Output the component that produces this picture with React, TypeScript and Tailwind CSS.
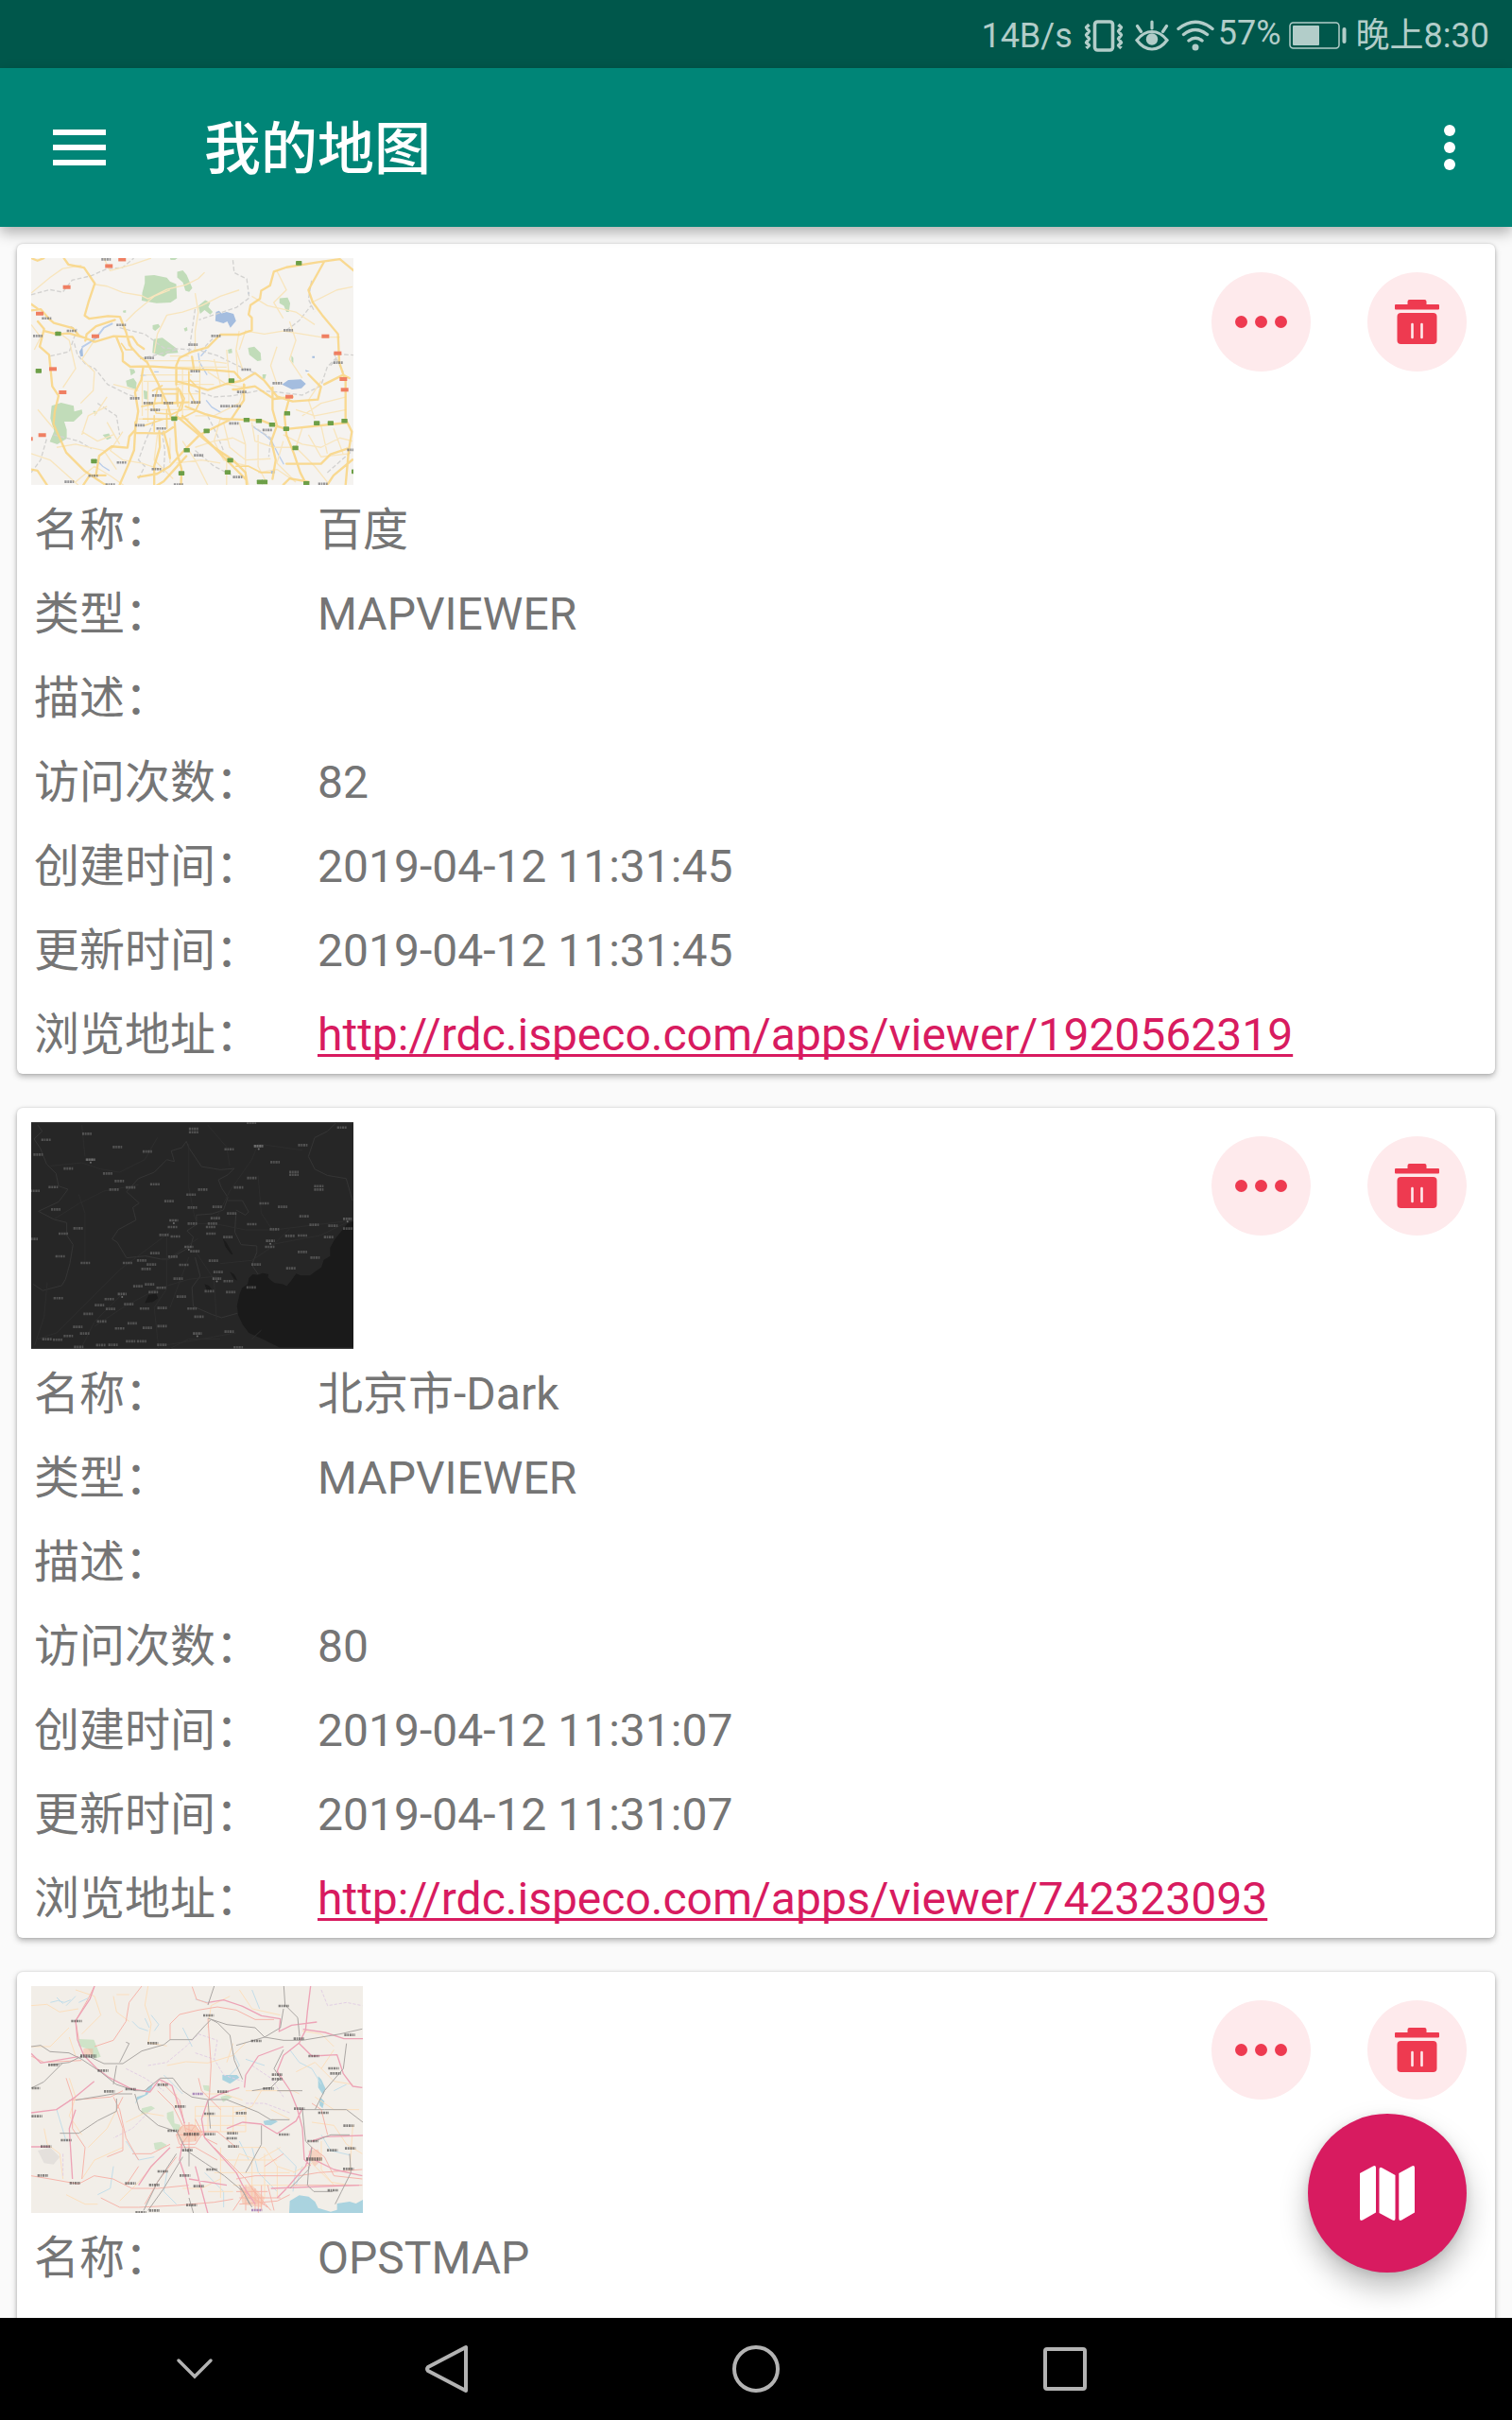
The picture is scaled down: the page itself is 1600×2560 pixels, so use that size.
import React from "react";

type MapKind = "light" | "dark" | "osm";

interface MapItem {
  name: string;
  type?: string;
  visits?: string;
  created?: string;
  updated?: string;
  url?: string;
  map: MapKind;
}

const ITEMS: MapItem[] = [
  {
    name: "百度",
    type: "MAPVIEWER",
    visits: "82",
    created: "2019-04-12 11:31:45",
    updated: "2019-04-12 11:31:45",
    url: "http://rdc.ispeco.com/apps/viewer/1920562319",
    map: "light",
  },
  {
    name: "北京市-Dark",
    type: "MAPVIEWER",
    visits: "80",
    created: "2019-04-12 11:31:07",
    updated: "2019-04-12 11:31:07",
    url: "http://rdc.ispeco.com/apps/viewer/742323093",
    map: "dark",
  },
  { name: "OPSTMAP", map: "osm" },
];

type Pt = [number, number];

/* Place-name marks, too small to read at thumbnail scale. */
function Marks({ pts, color, w = 32, h = 8, opacity = 1 }: { pts: Pt[]; color: string; w?: number; h?: number; opacity?: number }) {
  return (
    <g stroke={color} strokeWidth={h} strokeDasharray="7 2 5 2" opacity={opacity} fill="none">
      {pts.map(([x, y], i) => (
        <path key={i} d={`M${x - w / 2} ${y}h${w}`} />
      ))}
    </g>
  );
}

const L_GREEN: Pt[] = [[889, 55], [124, 279], [62, 397], [675, 428], [493, 549], [596, 588], [723, 553], [762, 556], [804, 568], [849, 581], [852, 532], [946, 563], [990, 563], [1034, 556], [878, 642], [533, 649], [671, 681], [663, 719], [516, 722], [238, 684], [765, 750], [780, 750], [913, 754], [1066, 717]];
const L_RED: Pt[] = [[328, 43], [286, 64], [152, 131], [66, 215], [243, 287], [108, 391], [139, 465], [74, 601], [974, 287], [1013, 341], [1031, 423], [1035, 457], [859, 479], [32, 613]];
const L_LABELS: Pt[] = [[277, 43], [88, 230], [167, 270], [60, 286], [325, 251], [414, 356], [553, 314], [626, 286], [856, 268], [1014, 371], [722, 393], [560, 398], [821, 436], [708, 464], [368, 484], [438, 475], [411, 499], [475, 499], [562, 497], [433, 521], [655, 509], [690, 509], [384, 570], [452, 580], [683, 564], [789, 585], [571, 665], [326, 688], [437, 709], [236, 730], [160, 749], [290, 758], [507, 758], [695, 734], [966, 756], [1058, 648]];

function LightMap() {
  return (
    <svg viewBox="39 39 1024 720" className="block h-[240px] w-[341px]" role="img" aria-label="百度">
      <rect x="39" y="39" width="1024" height="720" fill="#f5f3f0" />
      <g fill="#c1dcb9">
        <path d="M400 95l30 -2 40 8 10 12 20 8 2 45 -20 14 -45 2 -47 -8 2 -26 8 -30z" />
        <path d="M503 82l18 -4 12 14 18 42 -10 12 -12 -4 -8 -26 -18 -16zM570 190l22 -18 16 8 -6 14 14 16 -8 8 -18 -14 -14 12zM828 166l26 -2 8 18 -4 28 -8 0 -8 -20 -14 -8zM428 296l28 -4 16 12 30 22 4 14 -34 2 -12 10 -36 -12zM728 324l20 -4 20 20 2 24 -12 2 -26 -20zM104 508l30 -10 40 10 2 18 24 -6 2 12 -28 26 -30 0 8 26 0 28 -30 18 -24 -8 14 -34 -12 -40zM340 428l24 -8 10 14 -2 22 -28 -10zM266 600l20 -4 8 14 -14 6zM352 390l14 2 4 10 -14 10zM425 252l18 -4 6 8 -16 14 -8 -6zM480 39h24l-8 6h-14zM396 458l12 4 4 26 -14 -2zM774 408l12 0 -4 14 -8 0zM330 206l10 -2 0 8 -8 0zM524 262l10 -4 2 10 -8 4zM664 330l12 -4 2 14 -12 2zM236 524l8 0 4 10 -10 -2zM866 348l6 8 0 18 -6 -8z" />
      </g>
      <g fill="#a4bddf">
        <path d="M626 210l10 -4 8 8 16 -4 22 6 8 22 -18 22 -10 -20 -12 6 -26 -8zM836 440l20 -14 40 -2 16 14 -14 14 -30 4zM800 712l14 -2 0 12 -12 2zM192 336l10 -16 2 30 -8 2zM728 146l6 4 -6 4zM910 394l14 4 -12 2zM932 350h8v6h-8z" />
      </g>
      <g fill="none" stroke="#b9cdea" strokeWidth="6">
        <path d="M200 322l26 -16 20 -14 24 -32 28 -14" />
        <path d="M746 576l36 24 20 18 20 40 20 36M578 350l18 -20M595 490l18 22 30 18M246 680l20 20 22 14M570 340l4 30 24 40M386 412l20 -2M430 400h14" strokeWidth="4" />
      </g>
      <g fill="none" stroke="#d3d2d0" strokeWidth="4" strokeDasharray="14 7">
        <path d="M39 155l60 -16 40 8 30 -38 60 -14 50 -22 50 -4 36 -30M320 260l80 20 60 44 120 8 40 -42M680 45l4 40 40 20 8 60 -40 30 -60 20 -60 20M580 334l50 14 60 30 60 26M100 350l60 -14 24 -70 -20 -10M176 310l10 36 26 30 30 14 40 50 60 30 40 14M560 460l60 20 60 -4 80 -16 60 4 80 10 60 -30 20 -60 40 -40 60 4M600 540l30 60 20 50M380 740l20 -40 -20 -20 22 -60 30 -70M740 570l60 40 -6 60M930 110l-10 60 20 40M850 268l40 -30 40 -50M250 500l60 40 10 60M39 720l30 -40 20 -70M990 380l20 -20M560 200l-20 140M980 720l80 -70" />
        <path d="M454 590l10 60 -4 70M500 330l-120 30M560 650l60 50 60 30M110 600l80 20 40 24M1000 340l30 60" />
      </g>
      <g fill="none" stroke="#f8e5bd" strokeWidth="4" strokeLinejoin="round">
        <path d="M39 150l60 -50 40 -28 60 -10M240 122l40 6 50 20 60 10 20 10 60 -30 60 -14 40 -20 20 -20M270 39l20 40 70 -20 60 -20M340 240l30 -30 60 -50 50 -20M430 340l10 -60 30 -60 50 -10 60 -20 60 -30 60 -20M560 150l10 60 -10 60 0 60M39 250l30 40 -20 40M120 270l40 30 20 90 -40 60M240 300l-40 60 40 40 -4 60 -40 40M700 330l20 -60 60 10 60 -10 120 20 60 0M700 270l-10 60 20 60M860 240l20 60 -20 60 40 60M820 440l-20 -60 20 -60M740 160l50 30 90 20 60 40M930 180l80 -40 50 -10" />
        <path d="M400 385h260M400 365h200l60 8M480 350h60M396 430h180M400 410h150M500 440h120M510 470h60M396 500h170M400 520h160M380 550h160M392 540v-140M410 560v-130M500 400v100M520 390v160M540 390v120M575 370v130M600 400l60 40 60 10M620 360l20 80M660 330l10 110M690 330l6 90M560 540l60 0 80 -40 20 -60M640 550l-20 70 30 60 80 20M560 640l60 -20 60 -10 40 20M650 560l20 80 50 40 80 -4M700 560l20 70 0 90 10 39M740 560l10 60 60 20 60 0M760 600v100l30 58M840 600l60 30 60 10 60 -30 40 10M840 620l-20 70 60 60M900 580l-20 60 60 60 40 50M920 600l40 70 90 -10M960 570l20 90M1000 580l30 80M330 590l-40 60 40 30 60 10 60 20M280 560l40 70M60 520l50 60M120 640l60 -10 90 20 40 60M200 590l50 30 50 -20M39 660l60 20 90 80M180 750l60 -50 50 30 70 50M440 600l-10 80 60 60M480 610l0 80M520 620l40 60 40 80M600 620l60 50 0 90M500 690l80 -10 60 10M760 720l60 -10 60 40M1040 480l-80 20 -60 40M1040 520l-100 20 -60 -20M960 430l-40 60 20 60M280 480l-40 60M300 440l80 20M820 80l30 60 -40 40 30 50M200 600l20 -60 60 -30" />
      </g>
      <g fill="none" stroke="#fad684" strokeWidth="7" strokeLinejoin="round" strokeLinecap="round" opacity="0.88">
        <path d="M143 39l14 20 50 10 34 50 -20 60 -12 42 14 10 60 -8 38 2 20 50 10 40 30 34 26 20 36 70 30 66 10 40M39 205l30 -4 26 30 16 14 60 16 20 24 50 20 60 -18 60 2 16 24 20 14M39 185l20 14M60 240l20 24 -14 56 30 26 10 100 20 30 -12 50 -4 40 40 90 60 60 60 40 30 14 110 8 50 -30 36 -40 36 -40M80 270l40 10 40 -2 50 14M305 235l-60 20 -30 26 -4 20M310 290l20 50 0 26 24 18 60 -2 140 10 60 2 70 6 20 22M556 392l-6 -40M500 440l0 -60 10 -24 40 -20 50 -14 40 -40 60 0 40 -14 0 -40 -10 -10 6 -30 30 -20 4 -26 28 -16 12 -44 40 -14 100 -16 70 -10 60 50M39 39l20 8 20 -8M970 50l-50 90 14 40 30 40 50 60 4 90 20 60 0 120 20 40 -10 60 -10 110M500 430l40 10 60 18 60 -20 50 -10 40 -24 30 24 40 50 50 16 80 -6 10 -40 -40 -40M970 440l60 -30 20 10M395 385l-6 40 -20 40 10 60 -10 60 -18 20 -6 36 -50 -4 -40 30 -10 60M370 560v34l90 2 30 -20M430 759l0 -60 18 -60 -2 -50M320 759l26 -60 20 -50 4 -70M460 590l14 50 6 34M495 560l6 90 16 60 -2 49M500 540l60 50 60 50 60 40 40 40 4 39M520 540l80 80 60 60 60 60M530 510l60 24 60 16 120 4 40 16 40 12 190 -20M806 450l0 70 14 50 -18 50 14 60 -10 60M860 480l-16 60 6 60 24 60 20 60 20 39M850 692l110 0 30 -30 60 -20M980 759l20 -30 60 -50M870 480l-60 6 -60 -40 -60 10 -10 0M715 440l0 50 -40 60 -60 30 -40 20 -50 50 -46 50 -40 24 -60 10M39 710l20 4 30 45M205 759l20 -30 50 0M840 759l20 -20 60 10" />
        <path d="M455 470h48v30h-48zM440 455h70l16 30 -10 36 -30 14 -50 -4 -8 -20zM425 460l30 -16M390 510l50 -10M400 570l60 -20 60 -4 40 -20 14 -30 0 -40 -30 -30M410 500l130 -4M470 520v60M430 540v50M540 400v60l20 40M505 450v60M395 550h110M690 700l40 0 40 20 30 0M500 540l20 -50 -10 -30M346 290l14 40 -20 0 -14 -20" strokeWidth="5" />
      </g>
      <g fill="#ef7f62">{L_RED.map(([x, y], i) => <rect key={i} x={x - 12} y={y - 6} width="24" height="12" />)}</g>
      <g fill="#6d9f48">{L_GREEN.map(([x, y], i) => <rect key={i} x={x - 9} y={y - 7} width="19" height="14" rx="2" />)}</g>
      <Marks pts={L_LABELS} color="#77777a" w={30} h={8} opacity={0.75} />
    </svg>
  );
}

const D_LABELS: Pt[] = [[217, 88], [87, 107], [62, 154], [314, 130], [409, 144], [228, 170], [158, 198], [283, 214], [320, 238], [303, 265], [356, 258], [433, 248], [110, 257], [52, 269], [118, 328], [189, 388], [142, 405], [46, 422], [132, 477], [212, 498], [126, 610], [556, 72], [556, 83], [669, 137], [762, 127], [903, 124], [1027, 68], [815, 178], [875, 209], [875, 218], [954, 254], [954, 265], [741, 228], [699, 258], [585, 265], [548, 281], [478, 302], [552, 322], [631, 320], [677, 341], [625, 356], [616, 373], [610, 384], [611, 405], [552, 373], [489, 384], [462, 409], [498, 414], [665, 416], [780, 309], [839, 320], [907, 350], [741, 375], [813, 391], [939, 377], [999, 380], [1046, 389], [985, 416], [862, 412], [902, 411], [798, 447], [902, 463], [942, 481], [865, 515], [755, 503], [619, 491], [560, 461], [433, 467], [490, 478], [346, 498], [391, 490], [422, 503], [405, 517], [525, 504], [507, 548], [634, 527], [666, 556], [739, 576], [674, 591], [606, 588], [379, 572], [416, 566], [453, 577], [428, 591], [517, 605], [288, 613], [257, 632], [350, 629], [292, 644], [400, 643], [456, 641], [551, 643], [573, 669], [221, 660], [264, 684], [188, 701], [210, 722], [158, 730], [124, 742], [90, 740], [191, 765], [261, 759], [300, 758], [356, 747], [391, 747], [321, 706], [361, 690], [409, 704], [456, 699], [669, 716], [698, 766], [455, 758], [740, 53]];
const D_CITIES: Pt[] = [[492, 363], [540, 447], [629, 548], [328, 597], [567, 722], [799, 428], [1044, 358], [762, 127], [228, 170]];

function DarkMap() {
  return (
    <svg viewBox="39 51 1024 720" className="block h-[240px] w-[341px]" role="img" aria-label="北京市-Dark">
      <rect x="39" y="51" width="1024" height="720" fill="#262626" />
      <path d="M1063 366l-20 8 -14 18 -26 32 -14 26 0 26 -20 12 -8 24 -20 14 -16 12 -30 0 -14 -6 -14 20 -16 20 -12 -6 -26 -4 -12 -8 -10 -10 2 -10 -18 -4 -16 6 -16 -2 -12 12 -4 20 -18 12 -8 20 -8 36 4 30 14 30 20 26 40 18 56 28h275z" fill="#1a1a1a" />
      <path d="M648 420l12 14 20 36 -6 0 -18 -24zM412 600l24 -4 6 14 -16 12 -26 4zM590 566l14 4 10 14 -16 4zM670 526l14 8 10 20 -10 -4z" fill="#1b1b1b" />
      <g fill="none" stroke="#353535" strokeWidth="3">
        <path d="M60 60l14 20 -26 24 20 30 20 50 30 30 8 40 30 10 -30 40 -64 30 50 26 40 10 0 40 20 30 -10 60 -14 50 -12 20 -60 16 -30 -20M380 230l50 -20 40 -40 24 6 -10 -34 34 -10 14 -20 8 20 40 60 60 10 44 -4 -20 20 -30 16 10 26 20 30 -14 40 -36 12 -50 4 0 30 -30 20 20 20 -8 30 -70 40 -24 0 -50 -10 -60 6 -30 -50 -16 -10 20 -30 56 -30 -10 -40 20 -14 -40 -36zM690 330l30 16 10 -10 -20 -36 -46 0M690 340l-4 60 20 40 50 4 0 20 -16 40 20 30M560 480l16 60 -26 36 4 60 60 26 30 10 50 -14M920 160l20 -60 40 -20 30 -29M920 160l20 40 40 20 60 10 20 70" />
      </g>
      <g fill="none" stroke="#2d2d2d" strokeWidth="3">
        <path d="M100 190l100 -10 60 20 60 10 80 -40 40 -70M110 360l80 -50 80 -40 110 -20M210 500l0 -160 -20 -60M200 60l10 100M540 120l0 140 20 100M560 373h60l100 20 90 0 250 -30M620 370l50 -100 70 -100 20 -50 140 20M60 740l60 -20 120 -120 80 -80 160 -120M240 700l90 -60 110 -60 100 -30 90 -10M470 400l0 180 -40 60 14 130M560 460l60 90 8 130M480 480l90 -60M640 500l100 -10 60 -40 60 -60M200 765l40 -80 90 -90M460 760l120 -20 110 -20M540 480l-60 160M760 220l10 120 40 60M90 560l-10 110 -30 90M800 440l160 -30 80 -40M640 740l-100 0 -60 30M740 740l30 -28M600 60l60 70 10 60" />
      </g>
      <Marks pts={D_LABELS} color="#707070" w={32} h={8} opacity={0.6} />
      <Marks pts={D_CITIES} color="#8a8a8a" w={28} h={8} opacity={0.5} />
      <g fill="#8f8f8f" opacity="0.7">{D_CITIES.map(([x, y], i) => <circle key={i} cx={x} cy={y + 9} r="3" />)}</g>
    </svg>
  );
}

const O_LABELS: Pt[] = [[183, 159], [110, 298], [50, 372], [57, 461], [267, 316], [287, 382], [355, 375], [425, 229], [457, 361], [602, 141], [841, 111], [754, 222], [889, 215], [1050, 203], [936, 270], [999, 309], [1005, 325], [820, 329], [820, 343], [792, 373], [647, 383], [512, 430], [605, 453], [706, 451], [890, 437], [967, 450], [842, 519], [489, 507], [606, 518], [678, 515], [676, 531], [681, 557], [150, 537], [86, 557], [612, 630], [457, 636], [527, 649], [571, 683], [430, 679], [354, 674], [178, 673], [76, 649], [548, 743], [430, 760], [387, 766], [1046, 628], [995, 569], [1052, 563], [997, 696], [933, 540], [1047, 491], [535, 569]];

function OsmMap() {
  return (
    <svg viewBox="39 48 1053 720" className="block h-[240px] w-[351px]" role="img" aria-label="OPSTMAP">
      <rect x="39" y="48" width="1053" height="720" fill="#f2eee8" />
      <g fill="#cfe3c8">
        <path d="M188 216l50 2 8 20 14 34 -20 6 -20 -30 -30 -10zM390 436l30 -8 12 8 -30 18 -14 -2zM470 450l20 -6 4 40 18 4 0 18 -20 -2 -22 -36zM428 546l24 -4 18 10 -26 18 -12 -4zM584 362l20 2 4 20 -20 -6zM640 400l24 -8 14 8 -30 16z" />
      </g>
      <path d="M60 570l40 -10 30 30 -20 24 -30 -4z" fill="#e4e0dc" />
      <g fill="#aad3df">
        <path d="M860 730l30 -18 30 4 20 16 10 20 40 12 20 -6 0 -20 40 -6 20 6 22 -12v42h-234zM646 330h46l8 8 -30 20 -24 -12zM776 476l30 -6 16 8 -22 12 -20 -2zM400 392l8 -22 18 -12 -6 18 -12 16 -30 16 -8 14 4 -22zM950 334l10 10 14 30 -8 20 -16 -24zM956 400l14 14 -6 22 -10 -10z" />
      </g>
      <g fill="none" stroke="#c3deea" strokeWidth="3">
        <path d="M100 100l24 -6 20 6 20 -8M150 110l30 -30M190 100l30 -14M120 84l20 20M360 160l20 20 30 10M400 150l14 30M420 140l24 30 -14 20M740 60l24 60M560 90l40 10M300 620l-10 70 -40 20M740 560l20 80 60 60M780 300l-60 -20M590 640l60 60 0 50M470 640l-10 60 40 40M960 520l30 50 60 14M860 250l30 40 40 20 30 50M1000 380l40 -20M700 540l30 60M120 440l30 100M520 180l30 60M340 540l40 60 50 -10M680 260l20 40 -30 30M460 330l60 60M820 560l60 60 -10 80M900 620l-20 60" />
      </g>
      <g fill="none" stroke="#fcdfbd" strokeWidth="3">
        <path d="M39 110l50 -4 40 24 60 -10M180 60l60 20 20 60 -60 60M310 75l40 0M300 80l10 50 40 30M410 48l-10 60 20 60 -10 60 60 10M470 300l60 -12 70 4 80 -24 40 -40M39 240l60 0 60 -60M160 340l20 60 -20 60 40 60M220 560l60 -60 40 -80M80 500l10 50 40 30 10 80M560 430h160v80h-160zM600 430v80M640 430v80M680 430v80M560 460h160M560 490h160M600 180l10 -70 60 -30M700 60l40 60 90 20M660 290l20 -60M720 380l150 0 20 10M770 380l-30 50 -60 20M830 560l-70 40 -60 -20 -20 50M800 440l60 30M640 560l0 160M700 560l80 0 40 60 60 20M740 600v120M780 580v140M820 620v100M640 600h180M620 640h240M680 680h200M930 480l70 10 40 60 50 30M870 640l60 -30 60 60 60 10M960 540l0 90 40 50M880 320l60 -30 60 60 60 10M940 400l60 40 80 0M1000 250l-40 60M1060 490l-10 150M900 190l60 10 40 40M340 480l60 -30 60 10M200 660l40 -60 90 -40M440 600l-60 70 -60 60M520 690l60 0 60 -30M600 700l80 0M160 210l20 60M250 740l-40 0 -60 -30M590 390l60 0 60 20M500 390l0 40" />
      </g>
      <g fill="none" stroke="#e2cfe4" strokeWidth="3" strokeDasharray="10 5">
        <path d="M410 300l60 -10 60 -50 40 -40 60 20 -10 60M560 260l60 20 30 50 60 20M340 310l60 30 60 40M960 60l20 50 60 -10 50 10M740 300l60 40 40 60M420 440l-60 60 -60 30M140 580l0 70M720 420l60 0 80 30" />
      </g>
      <g fill="none" stroke="#f6b5ab" strokeWidth="3" strokeLinejoin="round">
        <path d="M480 218l0 -50 30 -30 60 -14 60 -10 60 10 60 30 60 0M600 150l10 150 -6 110M240 48l-20 40 -40 70 10 60M240 240l60 -20 40 -60 10 -60 40 -52M39 270l40 20 120 -6M150 340l20 60 0 100 40 60 -10 100M160 410l130 -10 40 -20M330 400l-20 40 20 60 0 70 -50 20M300 400l20 40 20 90 40 70M450 350l60 60 20 100M440 380l50 50 30 60M39 650l60 10 90 16 50 -26 60 10 60 30 80 0 100 -10M260 720l60 30 60 0 120 -6 120 -10 60 -10M400 740l40 -70 60 -80M640 440l-60 -60 -10 -40M550 50l14 40 40 14M360 580l60 0 60 -30M690 660l60 -10 140 0 60 -10 140 -10M870 680h220M700 690l90 60M660 600l60 60 40 60 0 48M700 740l120 -10 40 -20M620 560l90 90M930 560l40 30 30 60 90 10M930 420l30 20 20 80M500 560l60 0 70 40M380 620l-40 60M690 560l-60 -50 -100 0M840 580l-60 40M750 690l0 70M720 700l-40 60M790 680l20 80" />
        <path d="M520 490l40 0 20 30 -20 30 -50 0 -10 -30zM530 500l30 10 0 30M500 520h90M540 480v90M510 560l50 -70M560 470l30 60 40 20M700 680l30 40 50 20M690 700l100 0M700 720h130M720 680v80M740 690l60 70M770 680v80" />
      </g>
      <path d="M510 495l40 -10 30 26 -16 30 -50 4 -12 -24zM700 690l40 -10 40 40 -10 30 -60 -10zM920 570l30 -4 14 30 -24 24 -16 -20zM205 246h30v20h-30z" fill="#f7b79c" opacity="0.5" />
      <g fill="none" stroke="#eda3b6" strokeWidth="4" strokeLinejoin="round">
        <path d="M240 48l-14 40 -46 70 6 60 20 50 40 40 40 30 70 36 60 10 30 -40 40 20 20 60 20 60M600 100l50 -8 60 20 60 30 60 10 -4 40 40 -20 80 -10M926 48l-10 80 -6 60 -20 40 -50 40 -20 50 40 60 24 60 16 60 6 100 20 20M1092 215l-60 0 -60 -20 -70 -10M890 230l40 40 80 -4 20 60 30 40 30 4M39 262l30 30 120 -20M39 450l80 -10 60 -40 60 -50M700 370l-60 20 -40 20M720 330l40 -60 80 -30M720 330l-4 40M520 540l-10 60 20 60 10 50M600 410l-20 60 10 60 100 110 20 40 40 60M660 500l50 -20 60 6 50 30 60 -40 20 -40M540 660l120 20M560 620l40 150M930 540l40 -14 122 -4M930 560l-20 60 -60 70 -30 30M940 600l60 30 90 20M480 560l-60 60 -40 60M180 440l-20 60 10 160M800 690l280 -10M39 558l60 0" />
      </g>
      <g fill="none" stroke="#aaa6a3" strokeWidth="3" strokeLinejoin="round">
        <path d="M39 240l30 -4 30 20 60 4 40 20 60 40 50 40 60 20 30 0 50 -40 40 0 30 40 30 20 50 8 60 0 100 40 40 24 60 0M220 270l50 24 60 0 60 -40 70 -20 20 -16 70 0 40 -44 20 -20 20 10 40 40 14 80 26 60M620 48l-20 60M600 150l60 20 90 10 30 30 60 10 60 0 120 -20 70 -16M841 48l4 60 40 40 6 60M840 120l-10 60 -50 30 -90 26M320 290l30 -60 -10 -4M310 300l-10 60M368 390l14 50 60 50 60 20 30 60 60 40 60 40 60 50 20 40M600 410l8 90M500 580l-60 90 -44 90M520 590l-60 100 -50 70M540 560l0 60M180 410l120 -20 60 0M130 515h60l60 -40 60 -30 0 -40M900 440l10 100 20 20 -10 70 -60 60M770 490l0 60 -50 90M890 440l80 0 70 0 52 40M1040 230l-10 80 -60 70 -30 60M820 380l80 0M540 720l14 48M1050 580l4 60 -30 60 -20 40M700 680l40 70M39 372l40 -20 60 -60M200 270l-40 20 -60 8M840 250l-30 60 20 30 -30 30 -60 10M940 540l50 -20 60 0M920 620l-4 60 20 20 60 0" />
      </g>
      <Marks pts={O_LABELS} color="#3f3d3c" w={34} h={8} opacity={0.6} />
      <Marks pts={[[220, 270], [548, 518], [937, 597]]} color="#3f3d3c" w={50} h={10} opacity={0.65} />
      <Marks pts={[[568, 390], [755, 759]]} color="#9a72b0" w={34} h={8} opacity={0.8} />
    </svg>
  );
}

function Thumb({ kind }: { kind: MapKind }) {
  if (kind === "light") return <LightMap />;
  if (kind === "dark") return <DarkMap />;
  return <OsmMap />;
}

function Row({ label, children }: { label: string; children?: React.ReactNode }) {
  return (
    <div className="flex h-[89px] items-center">
      <dt className="w-[300px] shrink-0 whitespace-nowrap">{label}：</dt>
      <dd className="min-w-0">{children}</dd>
    </div>
  );
}

function RoundButton({ label, children }: { label: string; children: React.ReactNode }) {
  return (
    <button type="button" aria-label={label} className="flex size-[105px] items-center justify-center rounded-full bg-[#feeaec] text-[#ee3a50]">
      {children}
    </button>
  );
}

function Card({ item }: { item: MapItem }) {
  return (
    <article className="h-[878px] shrink-0 rounded-md bg-white px-[15px] pt-[15px] shadow-[0_3px_6px_rgba(0,0,0,0.28),0_0_3px_rgba(0,0,0,0.14)]">
      <div className="flex items-start justify-between">
        <Thumb kind={item.map} />
        <div className="flex gap-[60px] pt-[15px] pr-[15px]">
          <RoundButton label="更多">
            <svg viewBox="0 0 55 13" className="h-[13px] w-[55px]" fill="currentColor" aria-hidden="true">
              <circle cx="6.5" cy="6.5" r="6.500" />
              <circle cx="27.5" cy="6.5" r="6.500" />
              <circle cx="48.5" cy="6.5" r="6.500" />
            </svg>
          </RoundButton>
          <RoundButton label="删除">
            <svg viewBox="0 0 47 47" className="size-[47px]" fill="currentColor" aria-hidden="true">
              <path d="M13.500 5V2q0-2 2-2h16q2 0 2 2v3H46q1 0 1 1v3.500q0 1-1 1H1q-1 0-1-1V6q0-1 1-1z" />
              <rect x="2.500" y="14" width="42" height="33" rx="4" />
              <path d="M18.500 26v14M28.500 26v14" stroke="#feeaec" strokeWidth="2.600" strokeLinecap="round" />
            </svg>
          </RoundButton>
        </div>
      </div>
      <dl className="pt-[3px] pl-[3px] text-5xl text-[#757575]">
        <Row label="名称">{item.name}</Row>
        {item.url && (
          <>
            <Row label="类型">{item.type}</Row>
            <Row label="描述" />
            <Row label="访问次数">{item.visits}</Row>
            <Row label="创建时间">{item.created}</Row>
            <Row label="更新时间">{item.updated}</Row>
            <Row label="浏览地址">
              <a href={item.url} className="text-[#d81b60] underline decoration-[3px] underline-offset-4 [text-decoration-skip-ink:none]">
                {item.url}
              </a>
            </Row>
          </>
        )}
      </dl>
    </article>
  );
}

function StatusBar() {
  return (
    <div className="flex h-[72px] shrink-0 items-center justify-end bg-[#00574b] pt-[3px] pr-6 text-4xl text-[#b2cdc9]">
      <span>14B/s</span>
      <svg viewBox="0 0 42 34" className="ml-3 h-[34px] w-[42px]" fill="none" stroke="currentColor" aria-hidden="true">
        <rect x="11.5" y="2" width="19" height="30" rx="3" strokeWidth="3.6" />
        <path d="M5.500 5l-3 3 3 4-3 4 3 4-3 4 3 3-3 3M36.500 5l3 3-3 4 3 4-3 4 3 4-3 3 3 3" strokeWidth="3.4" strokeLinejoin="round" />
      </svg>
      <svg viewBox="0 0 36 34" className="ml-3 h-[34px] w-9" fill="none" stroke="currentColor" strokeWidth="3.2" strokeLinecap="round" aria-hidden="true">
        <path d="M2 21.500q7-9 16-9t16 9q-7 9.500-16 9.500T2 21.500zM18 2v7M2.500 6.500l4 6M33.500 6.500l-4 6" />
        <circle cx="18" cy="20.500" r="6.200" fill="currentColor" stroke="none" />
      </svg>
      <svg viewBox="0 0 40 34" className="ml-2 h-[34px] w-10" fill="none" stroke="currentColor" strokeWidth="3.400" strokeLinecap="round" aria-hidden="true">
        <path d="M2 9.500Q20-5 38 9.500M7.500 15.500q12.500-10 25 0M13 22q7-5.500 14 0" />
        <circle cx="20" cy="29" r="3.500" fill="currentColor" stroke="none" />
      </svg>
      <span className="ml-1 pb-[5px]">57%</span>
      <svg viewBox="0 0 61 30" className="ml-2 h-[30px] w-[61px]" fill="currentColor" aria-hidden="true">
        <rect x="1" y="1" width="52" height="27" rx="3.500" fill="none" stroke="currentColor" strokeWidth="1.500" />
        <rect x="4" y="4" width="28" height="21" rx="1" />
        <rect x="56.500" y="6" width="4" height="17" rx="2" />
      </svg>
      <span className="ml-2.5">晚上8:30</span>
    </div>
  );
}

function NavBar() {
  return (
    <nav className="z-10 flex h-[108px] shrink-0 items-center bg-black text-[#b3b3b3]">
      <div className="flex-1">
        <div className="flex justify-end pr-[84px]">
          <button type="button" aria-label="收起">
            <svg viewBox="0 0 40 24" className="h-6 w-10" fill="none" stroke="currentColor" strokeWidth="3.500" strokeLinecap="round" aria-hidden="true">
              <path d="M3 3l17 17L37 3" />
            </svg>
          </button>
        </div>
      </div>
      <div className="flex w-[327px] justify-center">
        <button type="button" aria-label="返回">
          <svg viewBox="0 0 52 52" className="size-[52px]" fill="none" stroke="currentColor" strokeWidth="4" strokeLinejoin="round" aria-hidden="true">
            <path d="M46 3v46L6 28q-2-2 0-4z" />
          </svg>
        </button>
      </div>
      <div className="flex w-[327px] justify-center">
        <button type="button" aria-label="主页" className="size-[50px] rounded-full border-4 border-[#b3b3b3]" />
      </div>
      <div className="flex w-[327px] justify-center">
        <button type="button" aria-label="最近任务" className="size-[46px] rounded-sm border-4 border-[#b3b3b3]" />
      </div>
      <div className="flex-1" />
    </nav>
  );
}

export default function App() {
  return (
    <div className="relative flex h-screen flex-col overflow-hidden bg-[#fafafa] font-['Roboto','Noto_Sans_CJK_SC',sans-serif]">
      <StatusBar />
      <header className="z-10 flex h-[168px] shrink-0 items-center justify-between bg-[#008577] pr-[60px] pl-14 text-white shadow-[0_6px_14px_rgba(0,0,0,0.3)]">
        <div className="flex items-center gap-[104px]">
          <button type="button" aria-label="菜单" className="flex w-14 flex-col gap-2.5">
            <span className="h-1.5 w-full bg-white" />
            <span className="h-1.5 w-full bg-white" />
            <span className="h-1.5 w-full bg-white" />
          </button>
          <h1 className="pt-1.5 text-6xl font-medium">我的地图</h1>
        </div>
        <button type="button" aria-label="更多选项" className="flex flex-col gap-1.5">
          <span className="size-3 rounded-full bg-white" />
          <span className="size-3 rounded-full bg-white" />
          <span className="size-3 rounded-full bg-white" />
        </button>
      </header>
      <main className="flex min-h-0 flex-1 flex-col gap-9 overflow-y-auto px-[18px] pt-[18px] [scrollbar-width:none]">
        {ITEMS.map((item) => (
          <Card key={item.name} item={item} />
        ))}
      </main>
      <button type="button" aria-label="新建地图" className="absolute right-12 bottom-[156px] flex size-[168px] items-center justify-center rounded-full bg-[#d81b60] text-white shadow-[0_16px_30px_rgba(0,0,0,0.26),0_2px_10px_rgba(0,0,0,0.1)]">
        <svg viewBox="0 0 58 58" className="size-[58px]" fill="currentColor" aria-hidden="true">
          <path d="M0 8L14 .4q3-1 3 1.600v47.500L3 57.600q-3 1-3-1.600zM20.500 4q0-3 3-1.800L37.500 10v46q0 2.600-3 1.600L20.500 50zM41.300 8l13.700-7.600q3-1 3 1.600v47.500l-13.700 8.100q-3 1-3-1.600z" />
        </svg>
      </button>
      <NavBar />
    </div>
  );
}
